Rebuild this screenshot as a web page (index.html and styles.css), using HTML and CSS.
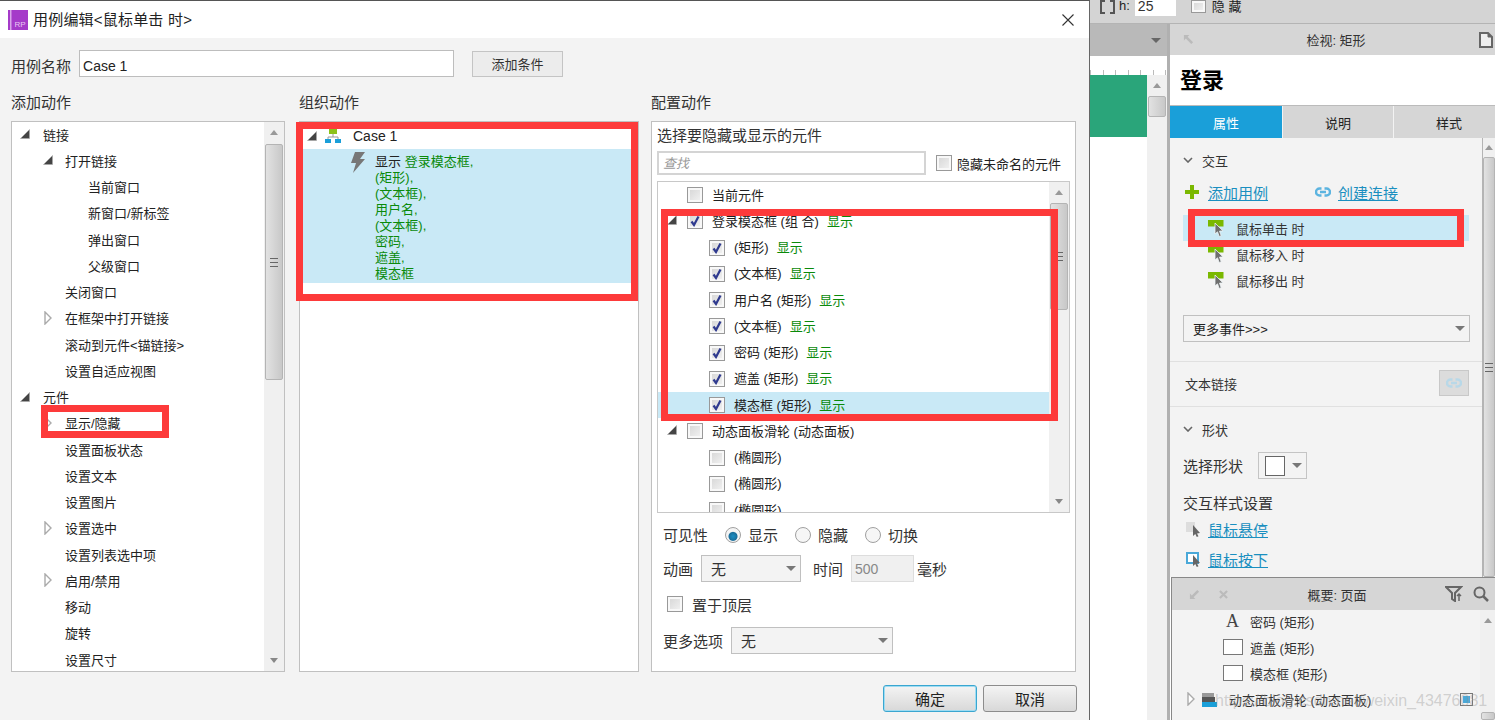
FILE: index.html
```html
<!DOCTYPE html>
<html lang="zh-CN">
<head>
    <meta charset="UTF-8">
    <title>用例编辑</title>
    <link rel="stylesheet" href="styles.css">
</head>
<body>
    <!-- shared icons -->
    <svg class="icon-defs" aria-hidden="true">
        <symbol id="tri-open" viewBox="0 0 10 10"><path d="M9.5 .5V9.5H.5Z" fill="#444" stroke="#aaa" stroke-width=".6"/></symbol>
        <symbol id="tri-closed" viewBox="0 0 8 14"><path d="M1 1L7 7L1 13Z" fill="#fff" stroke="#aaa" stroke-width="1.4"/></symbol>
        <symbol id="check" viewBox="0 0 12 12"><path d="M2.5 6.5L5 10L9.5 1.5" fill="none" stroke="#2f3a8f" stroke-width="2.2"/></symbol>
        <symbol id="event" viewBox="0 0 16 17"><rect width="15.500" height="6.500" fill="#7ab800"/><path d="M7 3L7 14L9.500 11.800L11.200 16.500L13.200 15.700L11.500 11.100L15 10.900Z" fill="#6e6e6e" stroke="#eef4f6" stroke-width=".8"/></symbol>
        <symbol id="chain" viewBox="0 0 16 10"><path d="M6.5 1.5H4.5A3.5 3.5 0 0 0 4.5 8.5H6.5M9.5 1.5H11.5A3.5 3.5 0 0 1 11.5 8.5H9.5M5 5H11" fill="none" stroke="currentColor" stroke-width="2.400"/></symbol>
        <symbol id="chevron" viewBox="0 0 10 6"><path d="M1 1L5 5L9 1" fill="none" stroke="#666" stroke-width="1.6"/></symbol>
    </svg>

    <div class="dialog">
        <div class="title-bar">
            <svg class="app-logo" viewBox="0 0 20 20"><rect width="20" height="20" fill="#a53bc9"/><rect x="2" width="1.5" height="20" fill="#d9a6ea"/><text x="6.5" y="17" class="logo-text">RP</text></svg>
            <span class="title-text">用例编辑&lt;鼠标单击 时&gt;</span>
            <svg class="close-icon" viewBox="0 0 12 12"><path d="M.5 .5L11.5 11.5M11.5 .5L.5 11.5" stroke="#333" stroke-width="1.1"/></svg>
        </div>

        <div class="dialog-body">
            <div class="name-row">
                <label class="big-label name-label">用例名称</label>
                <input class="name-input" type="text" value="Case 1">
                <button class="cond-button">添加条件</button>
            </div>

            <div class="columns">
                <!-- add action -->
                <div class="column">
                    <h2 class="big-label col-title">添加动作</h2>
                    <div class="panel tree-panel">
                        <div class="tree">
                            <div class="tree-row lv0"><svg class="arrow"><use href="#tri-open"/></svg>链接</div>
                            <div class="tree-row lv1"><svg class="arrow"><use href="#tri-open"/></svg>打开链接</div>
                            <div class="tree-row lv2">当前窗口</div>
                            <div class="tree-row lv2">新窗口/新标签</div>
                            <div class="tree-row lv2">弹出窗口</div>
                            <div class="tree-row lv2">父级窗口</div>
                            <div class="tree-row leaf">关闭窗口</div>
                            <div class="tree-row lv1"><svg class="arrow closed"><use href="#tri-closed"/></svg>在框架中打开链接</div>
                            <div class="tree-row leaf">滚动到元件&lt;锚链接&gt;</div>
                            <div class="tree-row leaf">设置自适应视图</div>
                            <div class="tree-row lv0"><svg class="arrow"><use href="#tri-open"/></svg>元件</div>
                            <div class="tree-row lv1"><svg class="arrow closed"><use href="#tri-closed"/></svg>显示/隐藏</div>
                            <div class="tree-row leaf">设置面板状态</div>
                            <div class="tree-row leaf">设置文本</div>
                            <div class="tree-row leaf">设置图片</div>
                            <div class="tree-row lv1"><svg class="arrow closed"><use href="#tri-closed"/></svg>设置选中</div>
                            <div class="tree-row leaf">设置列表选中项</div>
                            <div class="tree-row lv1"><svg class="arrow closed"><use href="#tri-closed"/></svg>启用/禁用</div>
                            <div class="tree-row leaf">移动</div>
                            <div class="tree-row leaf">旋转</div>
                            <div class="tree-row leaf">设置尺寸</div>
                        </div>
                        <div class="scrollbar">
                            <span class="sb-up"></span>
                            <div class="sb-thumb tree-thumb"><span class="grip"></span></div>
                            <span class="sb-down"></span>
                        </div>
                    </div>
                </div>

                <!-- organize actions -->
                <div class="column">
                    <h2 class="big-label col-title">组织动作</h2>
                    <div class="panel org-panel">
                        <div class="case-row">
                            <svg class="arrow"><use href="#tri-open"/></svg>
                            <svg class="org-icon" viewBox="0 0 16 14"><rect x="4" width="8" height="5" fill="#8cc21a"/><path d="M8 5V8M3 10V8H13V10" fill="none" stroke="#999"/><rect y="10" width="6" height="4" fill="#1a9fd9"/><rect x="10" y="10" width="6" height="4" fill="#1a9fd9"/></svg>
                            <span class="case-name">Case 1</span>
                        </div>
                        <div class="action-block">
                            <svg class="bolt" viewBox="0 0 16 21"><path d="M5 0H15L10 7H15L3 21L6 11H1Z" fill="#777"/></svg>
                            <div class="action-lines">
                                <div>显示 <span class="ok">登录模态框,</span></div>
                                <div class="ok">(矩形),</div>
                                <div class="ok">(文本框),</div>
                                <div class="ok">用户名,</div>
                                <div class="ok">(文本框),</div>
                                <div class="ok">密码,</div>
                                <div class="ok">遮盖,</div>
                                <div class="ok">模态框</div>
                            </div>
                        </div>
                    </div>
                </div>

                <!-- configure action -->
                <div class="column">
                    <h2 class="big-label col-title">配置动作</h2>
                    <div class="panel config-panel">
                        <div class="config-title">选择要隐藏或显示的元件</div>
                        <div class="search-row">
                            <input class="search-input" type="text" placeholder="查找">
                            <span class="cb"></span>
                            <span>隐藏未命名的元件</span>
                        </div>
                        <div class="check-list">
                            <div class="check-rows">
                                <div class="check-row top"><span class="cb"></span>当前元件</div>
                                <div class="check-row top"><svg class="arrow"><use href="#tri-open"/></svg><span class="cb"><svg><use href="#check"/></svg></span>登录模态框 (组 合)<span class="ok state">显示</span></div>
                                <div class="check-row sub"><span class="cb"><svg><use href="#check"/></svg></span>(矩形)<span class="ok state">显示</span></div>
                                <div class="check-row sub"><span class="cb"><svg><use href="#check"/></svg></span>(文本框)<span class="ok state">显示</span></div>
                                <div class="check-row sub"><span class="cb"><svg><use href="#check"/></svg></span>用户名 (矩形)<span class="ok state">显示</span></div>
                                <div class="check-row sub"><span class="cb"><svg><use href="#check"/></svg></span>(文本框)<span class="ok state">显示</span></div>
                                <div class="check-row sub"><span class="cb"><svg><use href="#check"/></svg></span>密码 (矩形)<span class="ok state">显示</span></div>
                                <div class="check-row sub"><span class="cb"><svg><use href="#check"/></svg></span>遮盖 (矩形)<span class="ok state">显示</span></div>
                                <div class="check-row sub picked"><span class="cb"><svg><use href="#check"/></svg></span>模态框 (矩形)<span class="ok state">显示</span></div>
                                <div class="check-row top"><svg class="arrow"><use href="#tri-open"/></svg><span class="cb"></span>动态面板滑轮 (动态面板)</div>
                                <div class="check-row sub"><span class="cb"></span>(椭圆形)</div>
                                <div class="check-row sub"><span class="cb"></span>(椭圆形)</div>
                                <div class="check-row sub"><span class="cb"></span>(椭圆形)</div>
                            </div>
                            <div class="scrollbar">
                                <span class="sb-up"></span>
                                <div class="sb-thumb list-thumb"><span class="grip"></span></div>
                                <span class="sb-down"></span>
                            </div>
                        </div>
                        <div class="option-row vis-row">
                            <span class="opt-label">可见性</span>
                            <span class="radio on"></span><span class="radio-text">显示</span>
                            <span class="radio"></span><span class="radio-text">隐藏</span>
                            <span class="radio"></span><span class="radio-text">切换</span>
                        </div>
                        <div class="option-row anim-row">
                            <span>动画</span>
                            <div class="select anim-select">无<span class="caret"></span></div>
                            <span class="time-label">时间</span>
                            <input class="time-input" type="text" value="500" disabled>
                            <span>毫秒</span>
                        </div>
                        <div class="option-row top-row"><span class="cb"></span>置于顶层</div>
                        <div class="option-row more-row">
                            <span>更多选项</span>
                            <div class="select more-select">无<span class="caret"></span></div>
                        </div>
                    </div>
                </div>
            </div>

            <div class="dialog-buttons">
                <button class="dlg-button primary">确定</button>
                <button class="dlg-button">取消</button>
            </div>
        </div>
    </div>

    <div class="app-side">
        <div class="toolbar">
            <svg class="size-icon" viewBox="0 0 15 14"><path d="M5 1H1V13H5M10 1H14V13H10" fill="none" stroke="#555" stroke-width="2"/></svg>
            <span class="h-label">h:</span>
            <input class="h-input" type="text" value="25">
            <span class="cb tool-cb"></span>
            <span class="hide-label">隐 藏</span>
        </div>
        <div class="workspace">
            <div class="canvas">
                <div class="canvas-tabs"><span class="caret dark"></span></div>
                <div class="ruler"></div>
                <div class="canvas-main">
                    <div class="canvas-page"><div class="green-band"></div></div>
                    <div class="canvas-scroll">
                        <span class="sb-up"></span>
                        <div class="sb-thumb canvas-thumb"></div>
                    </div>
                </div>
            </div>

            <div class="inspector">
                <div class="pane-head">
                    <svg class="head-icon back" viewBox="0 0 12 12"><path d="M1 7V1H7L5 3L11 9L9 11L3 5Z" fill="#bbb"/></svg>
                    <span class="pane-title">检视: 矩形</span>
                    <svg class="file-icon" viewBox="0 0 14 16"><path d="M1 1H9L13 5V15H1Z" fill="#eee" stroke="#666" stroke-width="2"/><path d="M9 1V5H13" fill="#666" stroke="#666"/></svg>
                </div>
                <div class="widget-name">登录</div>
                <div class="tabs">
                    <div class="tab active">属性</div>
                    <div class="tab">说明</div>
                    <div class="tab tab-last">样式</div>
                </div>
                <div class="props">
                    <div class="props-main">
                        <div class="sect-head"><svg class="chev"><use href="#chevron"/></svg>交互</div>
                        <div class="link-row">
                            <svg class="plus" viewBox="0 0 14 14"><path d="M5 0H9V5H14V9H9V14H5V9H0V5H5Z" fill="#7ab800"/></svg>
                            <a class="link">添加用例</a>
                            <svg class="chain"><use href="#chain"/></svg>
                            <a class="link">创建连接</a>
                        </div>
                        <div class="event-list">
                            <div class="event picked"><svg class="event-icon"><use href="#event"/></svg>鼠标单击 时</div>
                            <div class="event"><svg class="event-icon"><use href="#event"/></svg>鼠标移入 时</div>
                            <div class="event"><svg class="event-icon"><use href="#event"/></svg>鼠标移出 时</div>
                        </div>
                        <div class="select event-select">更多事件&gt;&gt;&gt;<span class="caret"></span></div>
                        <div class="text-link-row">
                            <span>文本链接</span>
                            <div class="link-button"><svg class="chain pale"><use href="#chain"/></svg></div>
                        </div>
                        <div class="sect-head shape-head"><svg class="chev"><use href="#chevron"/></svg>形状</div>
                        <div class="shape-row">
                            <span class="big-label">选择形状</span>
                            <div class="shape-picker"><span class="shape-swatch"></span><span class="caret"></span></div>
                        </div>
                        <div class="big-label style-title">交互样式设置</div>
                        <div class="style-link">
                            <svg class="style-icon" viewBox="0 0 16 16"><rect y="1" width="9" height="10" fill="#ddd"/><path d="M7 4V15L9.300 13L10.800 16L12.500 15.300L11 12.400L14 12Z" fill="#666"/></svg>
                            <a class="link">鼠标悬停</a>
                        </div>
                        <div class="style-link">
                            <svg class="style-icon" viewBox="0 0 16 16"><rect x="1" y="2" width="11" height="10" fill="#fff" stroke="#4aa8d8" stroke-width="2"/><path d="M7 4V15L9.300 13L10.800 16L12.500 15.300L11 12.400L14 12Z" fill="#666"/></svg>
                            <a class="link">鼠标按下</a>
                        </div>
                    </div>
                    <div class="props-scroll">
                        <span class="sb-up"></span>
                        <div class="sb-thumb props-thumb"><span class="grip"></span></div>
                    </div>
                </div>
                <div class="outline">
                    <div class="pane-head outline-head">
                        <svg class="head-icon dim-left" viewBox="0 0 12 12"><path d="M1 5V11H7L5 9L11 3L9 1L3 7Z" fill="#bbb"/></svg>
                        <svg class="head-icon dim-x" viewBox="0 0 10 10"><path d="M1 1L9 9M9 1L1 9" stroke="#bbb" stroke-width="2.400"/></svg>
                        <span class="pane-title">概要: 页面</span>
                        <svg class="filter-icon" viewBox="0 0 18 16"><path d="M1 1H16L10 7V15L7 13V7Z" fill="none" stroke="#666" stroke-width="2"/><path d="M14 15V8M12 10L14 8L16 10" fill="none" stroke="#666" stroke-width="1.500"/></svg>
                        <svg class="search-icon" viewBox="0 0 16 16"><circle cx="6.500" cy="6.500" r="5" fill="none" stroke="#666" stroke-width="2"/><path d="M10 10L15 15" stroke="#666" stroke-width="2.500"/></svg>
                    </div>
                    <div class="outline-body">
                        <div class="outline-rows">
                            <div class="outline-row"><span class="glyph-a">A</span>密码 (矩形)</div>
                            <div class="outline-row"><span class="rect-box"></span>遮盖 (矩形)</div>
                            <div class="outline-row"><span class="rect-box"></span>模态框 (矩形)</div>
                            <div class="outline-row panel-row">
                                <svg class="arrow closed"><use href="#tri-closed"/></svg>
                                <svg class="layers" viewBox="0 0 15 15"><rect y="1" width="12" height="5" fill="#999"/><rect y="5" width="13" height="5" fill="#555"/><rect y="10" width="15" height="5" fill="#1a9fd9"/></svg>
                                动态面板滑轮 (动态面板)
                                <svg class="note-icon" viewBox="0 0 13 13"><rect x=".5" y=".5" width="12" height="12" fill="#f3f3f3" stroke="#777"/><rect x="3" y="3" width="7" height="7" fill="#4aa8d8"/></svg>
                            </div>
                        </div>
                        <div class="outline-scroll">
                            <span class="sb-up"></span>
                            <div class="sb-thumb outline-thumb"></div>
                        </div>
                    </div>
                </div>
            </div>
        </div>
    </div>

    <!-- red review marks and the image watermark, laid over the window -->
    <div class="mark mark-action"></div>
    <div class="mark mark-org"></div>
    <div class="mark mark-list"></div>
    <div class="mark mark-event"></div>
    <div class="watermark">https://blog.csdn.net/weixin_43476081</div>
</body>
</html>
```

FILE: styles.css
```css
body {
    margin: 0;
    width: 1495px;
    height: 720px;
    overflow: hidden;
    position: relative;
    display: flex;
    font-family: "Liberation Sans", "Noto Sans CJK SC", sans-serif;
    font-size: 13px;
    color: #222;
    background: #fff;
}
.icon-defs {
    position: absolute;
    width: 0;
    height: 0;
}
.ok {
    color: #0a8a0a;
}
.big-label {
    font-size: 15px;
    font-weight: normal;
    color: #333;
}

/* dialog */
.dialog {
    flex: 0 0 1090px;
    box-sizing: border-box;
    height: 720px;
    display: flex;
    flex-direction: column;
    background: #f3f3f3;
    border-top: 1px solid #555;
    border-right: 1px solid #666;
}
.title-bar {
    flex: 0 0 37px;
    display: flex;
    align-items: center;
    padding-left: 8px;
    background: #fff;
}
.app-logo {
    width: 20px;
    height: 20px;
}
.logo-text {
    font-size: 8px;
    fill: #e8c8f2;
}
.title-text {
    margin: 0 0 2px 5px;
    font-size: 15px;
    letter-spacing: .2px;
    color: #222;
}
.close-icon {
    width: 12px;
    height: 12px;
    margin-left: auto;
    margin-right: 15px;
}
.dialog-body {
    flex: 1;
    padding: 12px 0 0 11px;
}
.name-row {
    display: flex;
    align-items: center;
    height: 27px;
}
.name-label {
    padding-top: 3px;
}
.name-input {
    box-sizing: border-box;
    width: 375px;
    height: 27px;
    margin: 0 18px 0 8px;
    padding: 4px 3px 0;
    border: 1px solid #bdbdbd;
    font: 14px "Liberation Sans", sans-serif;
    color: #222;
}
.cond-button {
    width: 91px;
    height: 26px;
    border: 1px solid #c4c4c4;
    background: #ececec;
    font: 13px "Liberation Sans", "Noto Sans CJK SC", sans-serif;
    color: #333;
}
.columns {
    display: grid;
    grid-template-columns: 274px 340px 425px;
    column-gap: 14px;
    margin-top: 15px;
}
.columns .column:last-child {
    width: 425px;
    margin-left: -2px;
}
.col-title {
    margin: 0;
    height: 29px;
    line-height: 22px;
}
.panel {
    box-sizing: border-box;
    height: 551px;
    border: 1px solid #c0c0c0;
    background: #fff;
}

/* add action tree */
.tree-panel {
    display: flex;
}
.tree {
    flex: 1;
    overflow: hidden;
}
.tree-row {
    height: 26.25px;
    padding-bottom: 2px;
    display: flex;
    align-items: center;
    box-sizing: border-box;
    white-space: nowrap;
}
.lv0 {
    padding-left: 8px;
}
.lv0 .arrow {
    margin-right: 13px;
}
.lv1 {
    padding-left: 31px;
}
.lv1 .arrow {
    margin-right: 12px;
}
.lv2 {
    padding-left: 76px;
}
.leaf {
    padding-left: 53px;
}
.arrow {
    flex: none;
    width: 10px;
    height: 10px;
}
.arrow.closed {
    height: 14px;
}

/* scrollbars */
.scrollbar {
    flex: 0 0 20px;
    display: flex;
    flex-direction: column;
    align-items: center;
    padding: 8px 0;
    box-sizing: border-box;
    background: #f0f0f0;
}
.sb-up, .sb-down {
    flex: none;
    width: 0;
    height: 0;
    border-left: 4px solid transparent;
    border-right: 4px solid transparent;
}
.sb-up {
    border-bottom: 5px solid #999;
}
.sb-down {
    margin-top: auto;
    border-top: 5px solid #888;
}
.sb-thumb {
    box-sizing: border-box;
    width: 18px;
    display: flex;
    align-items: center;
    justify-content: center;
    border: 1px solid #b4b4b4;
    border-radius: 2px;
    background: linear-gradient(90deg, #e2e2e2, #c8c8c8);
}
.tree-thumb {
    height: 236px;
    margin-top: 9px;
}
.list-thumb {
    height: 107px;
    margin-top: 8px;
}
.grip {
    width: 8px;
    height: 7px;
    border-top: 1px solid #666;
    border-bottom: 1px solid #666;
    background: linear-gradient(#666, #666) center / 100% 1px no-repeat;
}

/* organize actions */
.case-row {
    height: 27px;
    display: flex;
    align-items: center;
    padding-left: 7px;
}
.org-icon {
    width: 16px;
    height: 14px;
    margin: 0 12px 0 8px;
}
.case-name {
    font-size: 14px;
}
.action-block {
    height: 134px;
    margin: 0 7px 0 2px;
    display: flex;
    padding: 3px 0 0 48px;
    box-sizing: border-box;
    background: #c9e9f6;
}
.bolt {
    flex: none;
    width: 16px;
    height: 21px;
    margin-right: 9px;
}
.action-lines {
    padding-top: 2px;
    line-height: 16px;
}

/* configure action */
.config-panel {
    padding: 0 5px;
}
.config-title {
    height: 29px;
    line-height: 27px;
    font-size: 15px;
    color: #333;
}
.search-row {
    height: 24px;
    display: flex;
    align-items: center;
}
.search-input {
    box-sizing: border-box;
    width: 269px;
    height: 24px;
    margin-right: 10px;
    padding: 0 4px;
    border: 2px solid #d4d4d4;
    font: italic 13px "Liberation Sans", "Noto Sans CJK SC", sans-serif;
}
.search-input::placeholder {
    color: #999;
}
.search-row .cb {
    margin-right: 5px;
}
.cb {
    flex: none;
    box-sizing: border-box;
    width: 16px;
    height: 16px;
    display: inline-flex;
    align-items: center;
    justify-content: center;
    border: 1px solid #999;
    background: linear-gradient(135deg, #d4d4d4, #f4f4f4);
    box-shadow: inset 0 0 0 2px #f8f8f8;
}
.cb svg {
    width: 12px;
    height: 12px;
}
.check-list {
    box-sizing: border-box;
    display: flex;
    width: 413px;
    height: 332px;
    margin-top: 6px;
    border: 1px solid #c8c8c8;
}
.check-rows {
    flex: 1;
    overflow: hidden;
}
.check-row {
    box-sizing: border-box;
    height: 26.25px;
    padding-bottom: 2px;
    display: flex;
    align-items: center;
    white-space: nowrap;
    position: relative;
}
.check-row .cb {
    margin-top: 2px;
    margin-right: 9px;
}
.check-row.top {
    padding-left: 29px;
}
.check-row.top .arrow {
    margin: 0 10px 0 -20px;
}
.check-row.sub {
    padding-left: 51px;
}
.check-row.picked {
    background: #c9e9f6;
}
.state {
    margin-left: 8px;
}
.option-row {
    display: flex;
    align-items: center;
    white-space: nowrap;
    font-size: 15px;
    color: #333;
}
.vis-row {
    height: 21px;
    margin: 11px 0 0 6px;
}
.opt-label {
    width: 62px;
}
.radio {
    flex: none;
    box-sizing: border-box;
    width: 16px;
    height: 16px;
    border: 1px solid #a0a0a0;
    border-radius: 50%;
    background: #f6f6f6;
}
.radio.on {
    background: radial-gradient(circle at 50% 60%, #1a8fc4 0, #1a6f9c 4px, #f4f4f4 5px);
}
.radio-text {
    box-sizing: border-box;
    width: 54px;
    padding-left: 7px;
}
.anim-row {
    height: 27px;
    margin: 10px 0 0 6px;
}
.select {
    box-sizing: border-box;
    display: flex;
    align-items: center;
    border: 1px solid #c0c0c0;
    background: #f3f3f3;
    padding-left: 9px;
    height: 27px;
}
.caret {
    flex: none;
    width: 0;
    height: 0;
    margin-left: auto;
    margin-right: 4px;
    border-left: 5px solid transparent;
    border-right: 5px solid transparent;
    border-top: 5px solid #777;
}
.anim-select {
    width: 100px;
    margin-left: 8px;
}
.time-label {
    margin-left: 12px;
}
.time-input {
    box-sizing: border-box;
    width: 63px;
    height: 27px;
    margin: 0 3px 0 8px;
    padding: 0 3px;
    border: 1px solid #ddd;
    background: #f0f0f0;
    font: 14px "Liberation Sans", sans-serif;
    color: #888;
}
.top-row {
    height: 18px;
    margin: 13px 0 0 10px;
}
.top-row .cb {
    margin-right: 9px;
}
.more-row {
    height: 27px;
    margin: 14px 0 0 6px;
}
.more-select {
    width: 162px;
    margin-left: 8px;
}
.dialog-buttons {
    display: flex;
    gap: 6px;
    margin: 13px 0 0 872px;
}
.dlg-button {
    width: 94px;
    height: 27px;
    border: 1px solid #8c8c8c;
    border-radius: 3px;
    background: linear-gradient(#f4f4f4, #d8d8d8);
    font: 15px "Liberation Sans", "Noto Sans CJK SC", sans-serif;
    color: #222;
}
.dlg-button.primary {
    border-color: #3aa6d0;
    box-shadow: inset 0 0 0 1px #9fdcf2;
}

/* application behind the dialog */
.app-side {
    flex: 1;
    min-width: 0;
    display: flex;
    flex-direction: column;
}
.toolbar {
    flex: 0 0 24px;
    box-sizing: border-box;
    display: flex;
    align-items: flex-start;
    padding-left: 10px;
    background: #d4d4d4;
    border-bottom: 1px solid #b4b4b4;
}
.size-icon {
    width: 15px;
    height: 14px;
}
.h-label {
    margin: -2px 5px 0 4px;
}
.h-input {
    box-sizing: border-box;
    width: 41px;
    height: 16px;
    padding: 0 3px 5px;
    border: 0;
    font: 14px "Liberation Sans", sans-serif;
    color: #333;
}
.tool-cb {
    width: 15px;
    height: 13px;
    margin-left: 15px;
}
.hide-label {
    margin: -4px 0 0 6px;
}
.workspace {
    flex: 1;
    display: flex;
    min-height: 0;
}
.canvas {
    flex: 0 0 77px;
    display: flex;
    flex-direction: column;
    border-right: 3px solid #b0b0b0;
}
.canvas-tabs {
    flex: 0 0 32px;
    display: flex;
    align-items: center;
    background: #b9b9b9;
}
.caret.dark {
    border-top-color: #666;
    margin-right: 6px;
}
.ruler {
    flex: 0 0 19px;
    box-sizing: border-box;
    background: repeating-linear-gradient(90deg, #bbb 0 1px, transparent 1px 12.500px) 0 100% / 100% 5px no-repeat;
}
.canvas-main {
    flex: 1;
    display: flex;
    min-height: 0;
}
.canvas-page {
    flex: 1;
}
.green-band {
    height: 62px;
    background: #2aa57a;
}
.canvas-scroll {
    flex: 0 0 20px;
    display: flex;
    flex-direction: column;
    align-items: center;
    padding-top: 8px;
    box-sizing: border-box;
    background: #f0f0f0;
}
.canvas-thumb {
    height: 21px;
    margin-top: 8px;
}
.inspector {
    flex: 1;
    min-width: 0;
    display: flex;
    flex-direction: column;
}
.pane-head {
    flex: 0 0 31px;
    display: flex;
    align-items: center;
    position: relative;
    background: #d6d6d6;
}
.pane-title {
    position: absolute;
    left: 0;
    right: 0;
    text-align: center;
    padding-left: 7px;
    color: #333;
}
.head-icon {
    width: 11px;
    height: 11px;
}
.back {
    margin-left: 13px;
}
.file-icon {
    width: 14px;
    height: 16px;
    margin-left: auto;
    margin-right: 2px;
}
.widget-name {
    flex: 0 0 50px;
    box-sizing: border-box;
    padding: 2px 0 0 10px;
    line-height: 48px;
    font-size: 22px;
    font-weight: bold;
    color: #000;
    background: #fff;
}
.tabs {
    flex: 0 0 33px;
    box-sizing: border-box;
    display: grid;
    grid-template-columns: 112px 110px 1fr;
    column-gap: 1px;
    border-top: 1px solid #bbb;
    background: #f3f3f3;
}
.tab {
    display: flex;
    align-items: center;
    justify-content: center;
    background: #d6d6d6;
    color: #222;
}
.tab.active {
    background: #1a9fd9;
    color: #fff;
}
.tab-last {
    padding-left: 9px;
}
.props {
    flex: 1;
    min-height: 0;
    display: flex;
    background: #f3f3f3;
}
.props-main {
    flex: 1;
    padding: 11px 13px 0 13px;
    min-width: 0;
}
.sect-head {
    height: 22px;
    display: flex;
    align-items: center;
    color: #333;
}
.chev {
    width: 10px;
    height: 6px;
    margin-right: 9px;
}
.link-row {
    height: 24px;
    margin-top: 9px;
    display: flex;
    align-items: center;
    padding-left: 2px;
}
.plus {
    width: 14px;
    height: 14px;
    margin-right: 9px;
}
.link {
    font-size: 15px;
    color: #1a8fc0;
    text-decoration: underline;
}
.chain {
    width: 16px;
    height: 10px;
    margin: 0 7px 0 47px;
    color: #5cb4e0;
}
.event-list {
    margin-top: 11px;
}
.event {
    height: 26px;
    display: flex;
    align-items: center;
    padding-left: 25px;
    color: #333;
}
.event.picked {
    background: #c9e9f6;
}
.event-icon {
    width: 16px;
    height: 17px;
    margin-right: 12px;
}
.event-select {
    margin-top: 22px;
    width: 287px;
}
.text-link-row {
    margin: 19px -13px 0;
    padding: 8px 13px 10px 15px;
    display: flex;
    align-items: center;
    justify-content: space-between;
    color: #333;
    border-top: 1px solid #e0e0e0;
    border-bottom: 1px solid #e0e0e0;
}
.link-button {
    box-sizing: border-box;
    width: 30px;
    height: 26px;
    display: flex;
    align-items: center;
    justify-content: center;
    background: #dcdcdc;
    border: 1px solid #c8c8c8;
}
.chain.pale {
    margin: 0;
    color: #b8d8e8;
}
.shape-head {
    margin-top: 11px;
}
.shape-row {
    display: flex;
    align-items: center;
    margin-top: 12px;
}
.shape-picker {
    box-sizing: border-box;
    width: 49px;
    height: 27px;
    margin-left: 15px;
    display: flex;
    align-items: center;
    padding-left: 6px;
    border: 1px solid #c4c4c4;
}
.shape-swatch {
    box-sizing: border-box;
    width: 20px;
    height: 20px;
    background: #fff;
    border: 1px solid #666;
}
.style-title {
    margin-top: 14px;
    line-height: 21px;
}
.style-link {
    height: 30px;
    display: flex;
    align-items: center;
    padding-left: 3px;
}
.style-icon {
    width: 16px;
    height: 16px;
    margin-right: 6px;
}
.props-scroll {
    flex: 0 0 11px;
    box-sizing: border-box;
    display: flex;
    flex-direction: column;
    align-items: center;
    padding-top: 7px;
    border-left: 1px solid #b4b4b4;
    background: #f0f0f0;
}
.props-thumb {
    width: 12px;
    height: 420px;
    margin-top: 7px;
    flex: none;
}
.outline {
    flex: 0 0 143px;
    display: flex;
    flex-direction: column;
    box-sizing: border-box;
    border-top: 1px solid #888;
    border-left: 1px solid #888;
    margin-left: 1px;
}
.outline-head {
    flex: 0 0 32px;
}
.dim-left {
    margin-left: 17px;
}
.dim-x {
    width: 9px;
    height: 9px;
    margin-left: 19px;
}
.filter-icon {
    width: 18px;
    height: 16px;
    margin-left: auto;
}
.search-icon {
    width: 16px;
    height: 16px;
    margin: 0 6px 0 10px;
}
.outline-body {
    flex: 1;
    display: flex;
    min-height: 0;
    background: #f3f3f3;
}
.outline-rows {
    flex: 1;
    margin-top: -2px;
}
.outline-row {
    height: 26px;
    display: flex;
    align-items: center;
    padding-left: 51px;
    white-space: nowrap;
    color: #333;
}
.glyph-a {
    width: 27px;
    font: 18px "Liberation Serif", serif;
    padding-left: 3px;
    box-sizing: border-box;
    color: #444;
}
.rect-box {
    box-sizing: border-box;
    width: 20px;
    height: 16px;
    margin-right: 7px;
    background: #fff;
    border: 1px solid #777;
}
.panel-row {
    padding-left: 15px;
}
.panel-row .arrow {
    width: 8px;
}
.layers {
    width: 15px;
    height: 15px;
    margin: 0 12px 0 7px;
}
.note-icon {
    width: 13px;
    height: 13px;
    margin-left: auto;
    margin-right: 7px;
}
.outline-scroll {
    flex: 0 0 15px;
    display: flex;
    flex-direction: column;
    align-items: center;
    padding-top: 8px;
    box-sizing: border-box;
    background: #f0f0f0;
}
.outline-thumb {
    flex: none;
    width: 14px;
    height: 8px;
    margin-top: auto;
}

/* overlays */
.mark {
    position: absolute;
    box-sizing: border-box;
    border: 7px solid #fd3a3a;
}
.mark-action {
    left: 41px;
    top: 405px;
    width: 128px;
    height: 33px;
}
.mark-org {
    left: 296px;
    top: 122px;
    width: 342px;
    height: 179px;
}
.mark-list {
    left: 661px;
    top: 209px;
    width: 397px;
    height: 212px;
}
.mark-event {
    left: 1188px;
    top: 209px;
    width: 276px;
    height: 38px;
}
.watermark {
    position: absolute;
    left: 1215px;
    top: 692px;
    font-size: 16px;
    color: rgba(150, 150, 150, .4);
    white-space: nowrap;
}
```
